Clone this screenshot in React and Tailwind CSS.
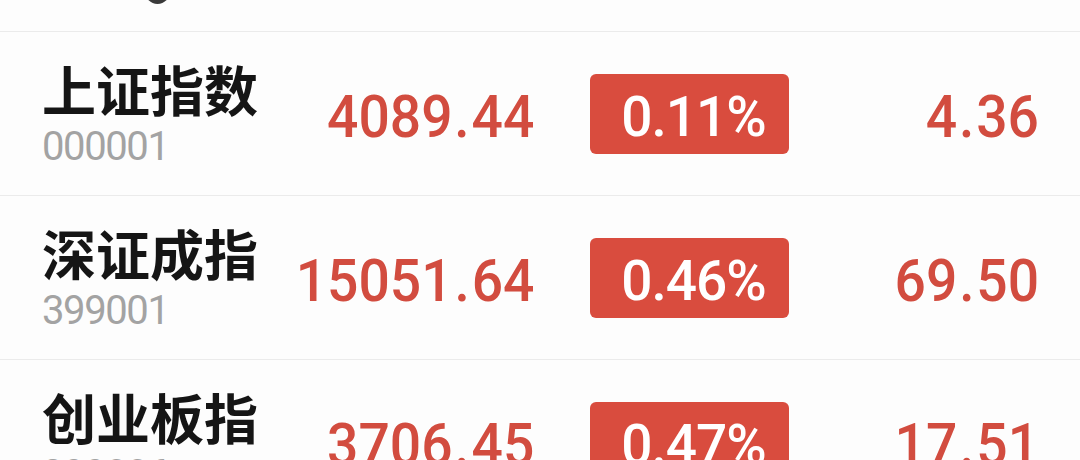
import React from "react";

const rows = [
  { name: "上证指数", code: "000001", price: "4089.44", pct: "0.11%", chg: "4.36" },
  { name: "深证成指", code: "399001", price: "15051.64", pct: "0.46%", chg: "69.50" },
  { name: "创业板指", code: "399006", price: "3706.45", pct: "0.47%", chg: "17.51" },
];

const num = { fontFamily: 'Roboto, "Liberation Sans", sans-serif' };
const cjk = { fontFamily: '"Noto Sans CJK SC", "Noto Sans", sans-serif' };

function Num({ value }) {
  const [a, b] = value.split(".");
  return (
    <span className="inline-block shrink-0 whitespace-nowrap origin-right scale-x-[0.92]">
      {a}
      <span className="mx-[2px]">.</span>
      {b}
    </span>
  );
}

export default function App() {
  return (
    <div className="w-[1080px] h-[460px] overflow-hidden bg-[#fdfdfd]">
      <div className="h-[32px] border-b border-[#ebebeb] overflow-hidden flex items-end pl-[145px]">
        <div className="w-[25px] h-[25px] rounded-full bg-[#3a3a3a] mb-[27px] shrink-0" />
      </div>
      {rows.map((r) => (
        <div key={r.code} className="h-[164px] border-b border-[#ebebeb] flex items-center pl-[42px] pr-[41px]">
          <div className="w-[250px] shrink-0 flex flex-col">
            <div className="text-[54px] leading-[56px] font-bold text-[#151515]" style={cjk}>
              {r.name}
            </div>
            <div className="mt-[10px] text-[40px] leading-[40px] text-[#a3a3a3] tracking-[-1.4px]" style={num}>
              {r.code}
            </div>
          </div>
          <div
            className="w-[242px] shrink-0 flex justify-end pt-[6px] text-[60px] leading-[60px] font-medium text-[#d24c3f]"
            style={num}
          >
            <Num value={r.price} />
          </div>
          <div
            className="ml-[56px] w-[199px] h-[80px] shrink-0 rounded-[6px] bg-[#d94c3e] flex items-center justify-center pl-[8px] pt-[8px] text-white text-[55px] leading-[55px] font-medium tracking-[-1px]"
            style={num}
          >
            {r.pct}
          </div>
          <div
            className="flex-1 flex justify-end pt-[6px] text-[60px] leading-[60px] font-medium text-[#d24c3f]"
            style={num}
          >
            <Num value={r.chg} />
          </div>
        </div>
      ))}
    </div>
  );
}
